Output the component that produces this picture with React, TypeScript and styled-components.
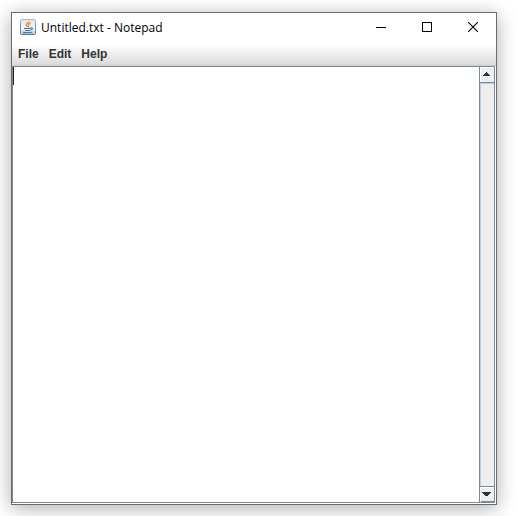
import React from "react";
import styled, { createGlobalStyle } from "styled-components";

const GlobalStyle = createGlobalStyle`
  * { box-sizing: border-box; }
  body { margin: 0; background: #fff; }
`;

const Desktop = styled.div`
  display: flex;
  height: 100vh;
  padding: 12px 20px 11px 11px;
  overflow: hidden;
  background: #fff;
`;

const Window = styled.main`
  display: flex;
  flex: 1;
  flex-direction: column;
  min-width: 0;
  border: 1px solid #6b6b6b;
  background: #fff;
  box-shadow: 0 3px 18px rgba(0, 0, 0, 0.33);
`;

const TitleBar = styled.header`
  display: flex;
  align-items: center;
  height: 28px;
  padding-left: 8px;
`;

const Title = styled.h1`
  flex: 1;
  margin: 0 0 0 5px;
  padding-top: 1px;
  font: 400 12px/16px "Segoe UI", "Open Sans", sans-serif;
  color: #000;
  white-space: nowrap;
`;

const CaptionButton = styled.button`
  display: grid;
  place-items: center;
  width: 46px;
  height: 28px;
  padding: 0;
  border: 0;
  background: transparent;
`;

const MenuBar = styled.nav`
  display: flex;
  align-items: center;
  gap: 10px;
  height: 25px;
  padding: 2px 6px 0;
  border-bottom: 1px solid #ccc;
  background: linear-gradient(#fff 3px, #dadada);
`;

const MenuButton = styled.button`
  padding: 0;
  border: 0;
  background: transparent;
  color: #333;
  font: 700 12px/16px "Liberation Sans", Arial, sans-serif;
`;

const ScrollPane = styled.section`
  display: flex;
  flex: 1;
  min-height: 0;
  margin: 0 1px 1px 0;
  border: 1px solid #7a8a99;
`;

const Editor = styled.div`
  position: relative;
  display: flex;
  flex: 1;
  min-width: 0;
`;

const TextInput = styled.textarea`
  flex: 1;
  min-width: 0;
  padding: 0;
  border: 0;
  outline: 0;
  resize: none;
  overflow: hidden;
  background: #fff;
  caret-color: transparent;
  font: 400 16px/18px "Liberation Sans", Arial, sans-serif;
`;

const Caret = styled.span`
  position: absolute;
  top: 0;
  left: 0;
  width: 1px;
  height: 18px;
  background: #222;
`;

const ScrollBar = styled.div`
  display: flex;
  flex-direction: column;
  width: 15px;
  border-left: 1px solid #7a8a99;
`;

const ArrowButton = styled.button<{ $end?: boolean }>`
  display: grid;
  place-items: center;
  height: 15px;
  padding: 0 2px 2px 0;
  border: 1px solid #fff;
  border-width: 1px 0 0 1px;
  background: #eee;
  box-shadow: ${({ $end }) => ($end ? "inset 0 -1px #7a8a99" : "none")};
`;

const Track = styled.div`
  flex: 1;
  border: solid #7a8a99;
  border-width: 1px 0;
  background: #eee;
  box-shadow: inset 1px 1px #b8cfe5;
`;

const JavaIcon = () => (
  <svg width="16" height="16" viewBox="0 0 16 16" aria-hidden="true">
    <defs>
      <linearGradient id="tile" x1="0" y1="0" x2="0" y2="1">
        <stop offset="0" stopColor="#dfe7ed" />
        <stop offset=".6" stopColor="#f4f6f8" />
        <stop offset="1" stopColor="#b9c9d5" />
      </linearGradient>
      <linearGradient id="rim" x1="0" y1="0" x2="0" y2="1">
        <stop offset="0" stopColor="#a7b8c5" />
        <stop offset="1" stopColor="#4f7692" />
      </linearGradient>
    </defs>
    <rect x=".5" y=".5" width="15" height="15" rx="1" fill="url(#tile)" stroke="url(#rim)" />
    <path d="M9 2.5C9.2 4 5.5 4.5 6.3 6.3L7.5 8M10.8 4.2C7.3 5.6 9.3 6.5 8 8.2" fill="none" stroke="#f08020" strokeWidth="1.3" />
    <path d="M4 9.5H10.5M5 11.5H10M10.5 9C13 8 13 10.5 10.5 11M3 13.3C5 14 10 14 12.5 13" fill="none" stroke="#3f7096" strokeWidth="1.1" />
  </svg>
);

const ArrowUp = () => (
  <svg width="7" height="4" viewBox="0 0 7 4" shapeRendering="crispEdges" aria-hidden="true">
    <path d="M3 0H4V1H5V2H6V3H7V4H0V3H1V2H2V1H3Z" fill="#333" />
  </svg>
);

const ArrowDown = () => (
  <svg width="9" height="4" viewBox="0 0 9 4" shapeRendering="crispEdges" aria-hidden="true">
    <path d="M0 0H9V1H8V2H7V3H6V4H3V3H2V2H1V1H0Z" fill="#333" />
  </svg>
);

export default function App() {
  return (
    <Desktop>
      <GlobalStyle />
      <Window>
        <TitleBar>
          <JavaIcon />
          <Title>Untitled.txt - Notepad</Title>
          <CaptionButton aria-label="Minimize">
            <svg width="10" height="10" viewBox="0 0 10 10" shapeRendering="crispEdges">
              <path d="M0 5H10V6H0Z" />
            </svg>
          </CaptionButton>
          <CaptionButton aria-label="Maximize">
            <svg width="10" height="10" viewBox="0 0 10 10">
              <rect x=".5" y=".5" width="9" height="9" fill="none" stroke="#000" />
            </svg>
          </CaptionButton>
          <CaptionButton aria-label="Close">
            <svg width="10" height="10" viewBox="0 0 10 10">
              <path d="M0 0L10 10M10 0L0 10" stroke="#000" strokeWidth="1.1" />
            </svg>
          </CaptionButton>
        </TitleBar>
        <MenuBar aria-label="Menu bar">
          <MenuButton>File</MenuButton>
          <MenuButton>Edit</MenuButton>
          <MenuButton>Help</MenuButton>
        </MenuBar>
        <ScrollPane>
          <Editor>
            <TextInput aria-label="Document text" spellCheck={false} />
            <Caret />
          </Editor>
          <ScrollBar>
            <ArrowButton aria-label="Scroll up"><ArrowUp /></ArrowButton>
            <Track />
            <ArrowButton $end aria-label="Scroll down"><ArrowDown /></ArrowButton>
          </ScrollBar>
        </ScrollPane>
      </Window>
    </Desktop>
  );
}
